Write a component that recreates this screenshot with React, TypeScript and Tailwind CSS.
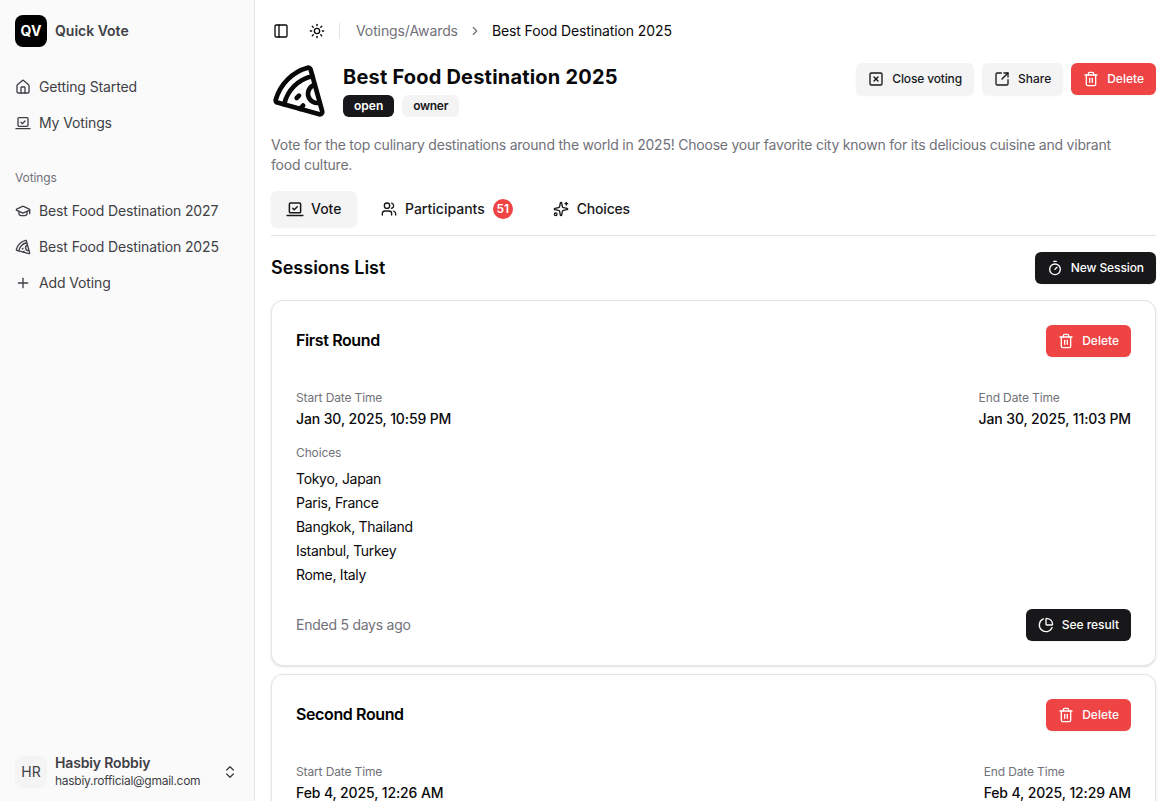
import {
  ChartPie,
  ChevronRight,
  ChevronsUpDown,
  GraduationCap,
  House,
  PanelLeft,
  Pizza,
  Plus,
  Sparkles,
  SquareArrowOutUpRight,
  SquareX,
  Sun,
  Timer,
  Trash2,
  Users,
} from 'lucide-react'

const choices = ['Tokyo, Japan', 'Paris, France', 'Bangkok, Thailand', 'Istanbul, Turkey', 'Rome, Italy']

// Laptop with a check, narrower screen than the lucide one
function LaptopCheck({ className = 'h-4 w-4' }: { className?: string }) {
  return (
    <svg
      viewBox="0 0 24 24"
      fill="none"
      stroke="currentColor"
      strokeWidth="2"
      strokeLinecap="round"
      strokeLinejoin="round"
      className={className}
    >
      <rect x="4.5" y="4" width="15" height="13" rx="1.5" />
      <path d="M1.5 20.5h21" />
      <path d="m9 11 2 2 4-4" />
    </svg>
  )
}

function NavItem({ icon, label }: { icon: React.ReactNode; label: string }) {
  return (
    <div className="flex h-9 items-center gap-2 px-[15px] text-sm tracking-[-0.12px] text-[#3f3f46]">
      <span className="flex w-4 items-center justify-center">{icon}</span>
      <span>{label}</span>
    </div>
  )
}

function DeleteButton() {
  return (
    <button className="flex h-8 items-center gap-2 rounded-md bg-[#ef4444] px-3 text-xs font-medium text-white shadow-xs">
      <Trash2 className="h-4 w-4" />
      Delete
    </button>
  )
}

function SessionCard({
  title,
  start,
  end,
  footer,
}: {
  title: string
  start: string
  end: string
  footer?: boolean
}) {
  return (
    <div className="rounded-xl border border-[#e4e4e7] bg-white p-6 shadow-sm">
      <div className="flex h-8 items-center justify-between">
        <h3 className="pb-0.5 text-base font-semibold leading-none tracking-[-0.38px] text-black">{title}</h3>
        <DeleteButton />
      </div>
      <div className="mt-[33px] flex justify-between">
        <div>
          <p className="text-xs leading-4 tracking-[-0.13px] text-[#71717a]">Start Date Time</p>
          <p className="mt-[3px] text-sm font-medium leading-5 tracking-[-0.12px] text-[#09090b]">{start}</p>
        </div>
        <div>
          <p className="text-xs leading-4 tracking-[-0.13px] text-[#71717a]">End Date Time</p>
          <p className="mt-[3px] text-sm font-medium leading-5 tracking-[-0.12px] text-[#09090b]">{end}</p>
        </div>
      </div>
      {footer && (
        <>
          <p className="mt-4 text-xs leading-4 tracking-[-0.13px] text-[#71717a]">Choices</p>
          <ul className="mt-1.5">
            {choices.map((c) => (
              <li key={c} className="h-6 text-sm leading-6 tracking-[-0.3px] text-[#09090b]">
                {c}
              </li>
            ))}
          </ul>
          <div className="mt-[22px] flex items-center justify-between">
            <span className="text-sm tracking-[-0.25px] text-[#71717a]">Ended 5 days ago</span>
            <button className="flex h-8 items-center gap-2 rounded-md bg-[#18181b] px-3 text-xs font-medium tracking-[-0.02px] text-white shadow-xs">
              <ChartPie className="h-4 w-4" />
              See result
            </button>
          </div>
        </>
      )}
    </div>
  )
}

export default function App() {
  return (
    <div className="flex h-screen overflow-hidden bg-white font-['Inter',sans-serif]">
      {/* Sidebar */}
      <aside className="flex w-[255px] shrink-0 flex-col border-r border-[#e4e4e7] bg-[#fafafa]">
        <div className="flex items-center gap-2 px-[15px] pt-[15px]">
          <div className="flex h-8 w-8 items-center justify-center rounded-lg bg-black text-sm font-bold text-white">
            QV
          </div>
          <span className="text-sm font-semibold text-[#3f3f46]">Quick Vote</span>
        </div>
        <nav className="mt-[22px]">
          <NavItem icon={<House className="h-4 w-4" />} label="Getting Started" />
          <NavItem icon={<LaptopCheck />} label="My Votings" />
        </nav>
        <p className="mt-[29px] px-[15px] text-xs leading-4 tracking-[-0.1px] text-[#71717a]">Votings</p>
        <nav className="mt-[7px]">
          <NavItem icon={<GraduationCap className="h-4 w-4" />} label="Best Food Destination 2027" />
          <NavItem icon={<Pizza className="h-4 w-4" />} label="Best Food Destination 2025" />
          <NavItem icon={<Plus className="h-4 w-4" />} label="Add Voting" />
        </nav>
        <div className="mt-auto flex items-center gap-2 px-[15px] pb-[11px]">
          <div className="flex h-8 w-8 items-center justify-center rounded-lg bg-[#f4f4f5] text-sm text-[#3f3f46]">
            HR
          </div>
          <div className="min-w-0 flex-1">
            <p className="text-sm font-semibold leading-[18px] tracking-[-0.15px] text-[#3f3f46]">Hasbiy Robbiy</p>
            <p className="text-xs leading-[18px] tracking-[-0.27px] text-[#3f3f46]">hasbiy.rofficial@gmail.com</p>
          </div>
          <ChevronsUpDown className="mr-px h-4 w-4 text-[#3f3f46]" />
        </div>
      </aside>

      {/* Main */}
      <main className="min-w-0 flex-1 pl-4 pr-[11px]">
        <header className="flex h-[62px] items-center pl-0.5 text-sm">
          <PanelLeft className="h-4 w-4 text-[#09090b]" />
          <Sun className="ml-5 h-4 w-4 text-[#09090b]" />
          <div className="ml-[14px] h-4 w-px bg-[#e4e4e7]" />
          <span className="ml-4 tracking-[-0.1px] text-[#71717a]">Votings/Awards</span>
          <ChevronRight className="ml-[10px] h-[14px] w-[14px] text-[#71717a]" />
          <span className="ml-[10px] tracking-[-0.12px] text-[#09090b]">Best Food Destination 2025</span>
        </header>

        <div className="mt-px flex items-start justify-between">
          <div className="flex items-start gap-4">
            <Pizza className="h-14 w-14 text-[#09090b]" />
            <div>
              <h1 className="text-xl font-bold leading-7 tracking-[0.2px] text-[#09090b]">Best Food Destination 2025</h1>
              <div className="mt-1 flex gap-2">
                <span className="flex h-[22px] items-center rounded-md bg-[#18181b] px-[11px] text-xs font-semibold text-white">
                  open
                </span>
                <span className="flex h-[22px] items-center rounded-md bg-[#f4f4f5] px-[11px] text-xs font-semibold tracking-[-0.3px] text-[#18181b]">
                  owner
                </span>
              </div>
            </div>
          </div>
          <div className="flex gap-2">
            <button className="flex h-8 items-center gap-2 rounded-md bg-[#f4f4f5] px-3 text-xs font-medium tracking-[-0.15px] text-[#18181b] shadow-xs">
              <SquareX className="h-4 w-4" />
              Close voting
            </button>
            <button className="flex h-8 items-center gap-2 rounded-md bg-[#f4f4f5] px-3 text-xs font-medium text-[#18181b] shadow-xs">
              <SquareArrowOutUpRight className="h-4 w-4" />
              Share
            </button>
            <DeleteButton />
          </div>
        </div>

        <p className="mt-4 max-w-[850px] text-sm leading-5 tracking-[-0.22px] text-[#71717a]">
          Vote for the top culinary destinations around the world in 2025! Choose your favorite city known for its
          delicious cuisine and vibrant food culture.
        </p>

        <div className="mt-4 flex border-b border-[#e4e4e7] pb-2 text-sm font-medium text-[#18181b]">
          <div className="flex h-9 w-[86px] items-center gap-[7px] rounded-md bg-[#f4f4f5] px-[15px] shadow-xs">
            <LaptopCheck className="h-[18px] w-[18px]" />
            Vote
          </div>
          <div className="ml-2 flex h-9 items-center gap-2 px-4">
            <Users className="h-4 w-4" />
            Participants
            <span className="flex h-5 w-5 items-center justify-center rounded-full bg-[#ef4444] text-xs font-semibold text-white">
              51
            </span>
          </div>
          <div className="ml-2 flex h-9 items-center gap-2 px-4 tracking-[-0.2px]">
            <Sparkles className="h-4 w-4" />
            Choices
          </div>
        </div>

        <div className="mt-4 flex h-8 items-center justify-between">
          <h2 className="text-lg font-semibold text-[#09090b]">Sessions List</h2>
          <button className="flex h-8 items-center gap-2 rounded-md bg-[#18181b] px-3 text-xs font-medium tracking-[-0.1px] text-white shadow-xs">
            <Timer className="h-4 w-4" />
            New Session
          </button>
        </div>

        <div className="mt-4 flex flex-col gap-2">
          <SessionCard title="First Round" start="Jan 30, 2025, 10:59 PM" end="Jan 30, 2025, 11:03 PM" footer />
          <SessionCard title="Second Round" start="Feb 4, 2025, 12:26 AM" end="Feb 4, 2025, 12:29 AM" />
        </div>
      </main>
    </div>
  )
}
